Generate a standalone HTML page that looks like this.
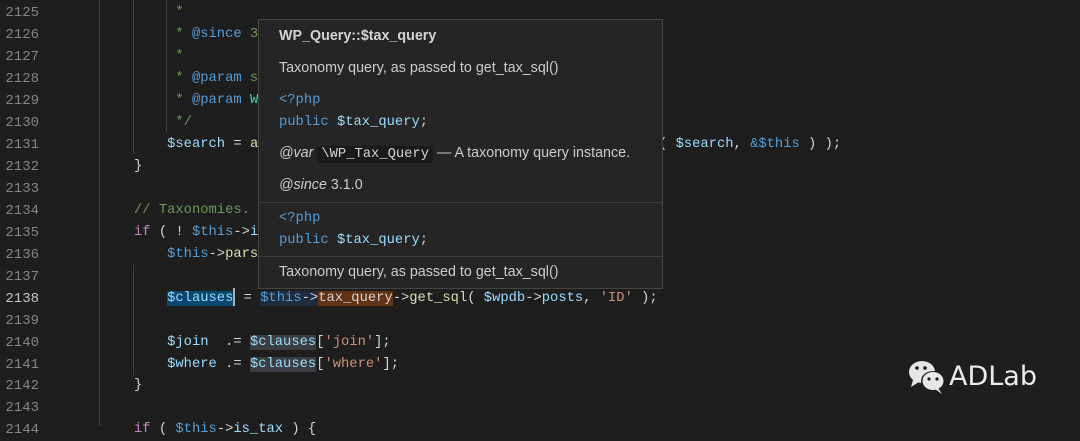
<!DOCTYPE html>
<html><head><meta charset="utf-8"><style>
body{margin:0;width:1080px;height:426px;background:#1e1e1e;overflow:hidden;position:relative;font-family:"Liberation Mono",monospace}
.ln{position:absolute;left:0;width:39px;text-align:right;color:#858585;font-size:14px;line-height:22px;font-family:"Liberation Mono",monospace}
.c{position:absolute;left:134px;font-size:13.8px;line-height:22px;color:#d4d4d4;white-space:pre}
.g{position:absolute;width:1px;background:#404040}
.cm{color:#6a9955}.kw{color:#569cd6}.v{color:#9cdcfe}.f{color:#dcdcaa}.s{color:#ce9178}.k{color:#c586c0}.t{color:#4ec9b0}
#pop{position:absolute;left:258px;top:19px;width:405px;height:270px;background:#252526;border:1px solid #454545;box-sizing:border-box;font-family:"Liberation Sans",sans-serif;color:#cccccc;font-size:14.3px}
#pop .r{position:absolute;left:20px;white-space:pre}
#pop .m{font-family:"Liberation Mono",monospace;font-size:13.8px}
.sep{position:absolute;left:0;right:0;height:1px;background:#3c3c3c}
</style></head><body>
<div class="g" style="left:99px;top:0;height:426px"></div>
<div class="g" style="left:133px;top:0;height:154px"></div>
<div class="g" style="left:166px;top:0;height:132px"></div>
<div class="g" style="left:133px;top:265px;height:110px"></div>

<div class="ln" style="top:2px">2125</div>
<div class="ln" style="top:24px">2126</div>
<div class="ln" style="top:46px">2127</div>
<div class="ln" style="top:68px">2128</div>
<div class="ln" style="top:90px">2129</div>
<div class="ln" style="top:112px">2130</div>
<div class="ln" style="top:134px">2131</div>
<div class="ln" style="top:156px">2132</div>
<div class="ln" style="top:178px">2133</div>
<div class="ln" style="top:200px">2134</div>
<div class="ln" style="top:222px">2135</div>
<div class="ln" style="top:244px">2136</div>
<div class="ln" style="top:266px">2137</div>
<div class="ln" style="top:288px;color:#c6c6c6">2138</div>
<div class="ln" style="top:310px">2139</div>
<div class="ln" style="top:332px">2140</div>
<div class="ln" style="top:354px">2141</div>
<div class="ln" style="top:375px">2142</div>
<div class="ln" style="top:397px">2143</div>
<div class="ln" style="top:419px">2144</div>

<div class="c cm" style="top:2px">     *</div>
<div class="c cm" style="top:24px">     * <span class="kw">@since</span> 3.1.0</div>
<div class="c cm" style="top:46px">     *</div>
<div class="c cm" style="top:68px">     * <span class="kw">@param</span> string</div>
<div class="c cm" style="top:90px">     * <span class="kw">@param</span> <span class="t">WP_Query</span></div>
<div class="c cm" style="top:112px">     */</div>
<div class="c" style="top:134px">    <span class="v">$search</span> = <span class="f">a</span></div>
<div class="c" style="top:134px;left:659px">( <span class="v">$search</span>, <span class="kw">&amp;$this</span> ) );</div>
<div class="c" style="top:156px">}</div>
<div class="c cm" style="top:200px">// Taxonomies.</div>
<div class="c" style="top:222px"><span class="k">if</span> ( ! <span class="kw">$this</span>-&gt;<span class="v">is_tax</span></div>
<div class="c" style="top:244px">    <span class="kw">$this</span>-&gt;<span class="f">parse_tax_query</span></div>
<div class="c" style="top:288px">    <span class="v" style="background:#094771">$clauses</span><span style="display:inline-block;width:2px;height:18px;background:#aeafad;vertical-align:middle"></span> = <span style="background:#1f2d3f"><span class="kw">$this</span>-&gt;</span><span class="v" style="background:#613214;color:#d4d4d4">tax_query</span>-&gt;<span class="f">get_sql</span>( <span class="v">$wpdb</span>-&gt;<span class="v">posts</span>, <span class="s">'ID'</span> );</div>
<div class="c" style="top:332px">    <span class="v">$join</span>  .= <span class="v" style="background:#3a3d41">$clauses</span>[<span class="s">'join'</span>];</div>
<div class="c" style="top:354px">    <span class="v">$where</span> .= <span class="v" style="background:#3a3d41">$clauses</span>[<span class="s">'where'</span>];</div>
<div class="c" style="top:375px">}</div>
<div class="c" style="top:419px"><span class="k">if</span> ( <span class="kw">$this</span>-&gt;<span class="v">is_tax</span> ) {</div>

<div id="pop">
<div class="r" style="top:8px;font-weight:bold;color:#d4d4d4">WP_Query::$tax_query</div>
<div class="r" style="top:40px">Taxonomy query, as passed to get_tax_sql()</div>
<div class="r m kw" style="top:73px">&lt;?php</div>
<div class="r m" style="top:95px"><span class="kw">public</span> <span class="v">$tax_query</span>;</div>
<div class="r" style="top:125px"><i>@var</i> <span class="m" style="background:#1a1a1a;padding:1px 4px;border-radius:3px;color:#d4d4d4">\WP_Tax_Query</span> — A taxonomy query instance.</div>
<div class="r" style="top:157px"><i>@since</i> 3.1.0</div>
<div class="sep" style="top:182px"></div>
<div class="r m kw" style="top:191px">&lt;?php</div>
<div class="r m" style="top:213px"><span class="kw">public</span> <span class="v">$tax_query</span>;</div>
<div class="sep" style="top:236px"></div>
<div class="r" style="top:244px">Taxonomy query, as passed to get_tax_sql()</div>
</div>

<svg style="position:absolute;left:907px;top:359px" width="40" height="36" viewBox="0 0 40 36">
<ellipse cx="15" cy="13" rx="13" ry="11" fill="#e6e6e6"/>
<path d="M6 21 L4 28 L12 23Z" fill="#e6e6e6"/>
<ellipse cx="26" cy="22" rx="12" ry="10" fill="#1e1e1e"/>
<ellipse cx="26" cy="22" rx="10.5" ry="9" fill="#e6e6e6"/>
<path d="M31 29 L35 35 L28 30Z" fill="#e6e6e6"/>
<circle cx="10" cy="9" r="1.8" fill="#1e1e1e"/><circle cx="18" cy="9" r="1.8" fill="#1e1e1e"/>
<circle cx="22" cy="20" r="1.6" fill="#1e1e1e"/><circle cx="30" cy="20" r="1.6" fill="#1e1e1e"/>
</svg>
<div style="position:absolute;left:949px;top:361px;font-family:'DejaVu Sans',sans-serif;font-size:27px;color:#ececec;line-height:32px">ADLab</div>
</body></html>
